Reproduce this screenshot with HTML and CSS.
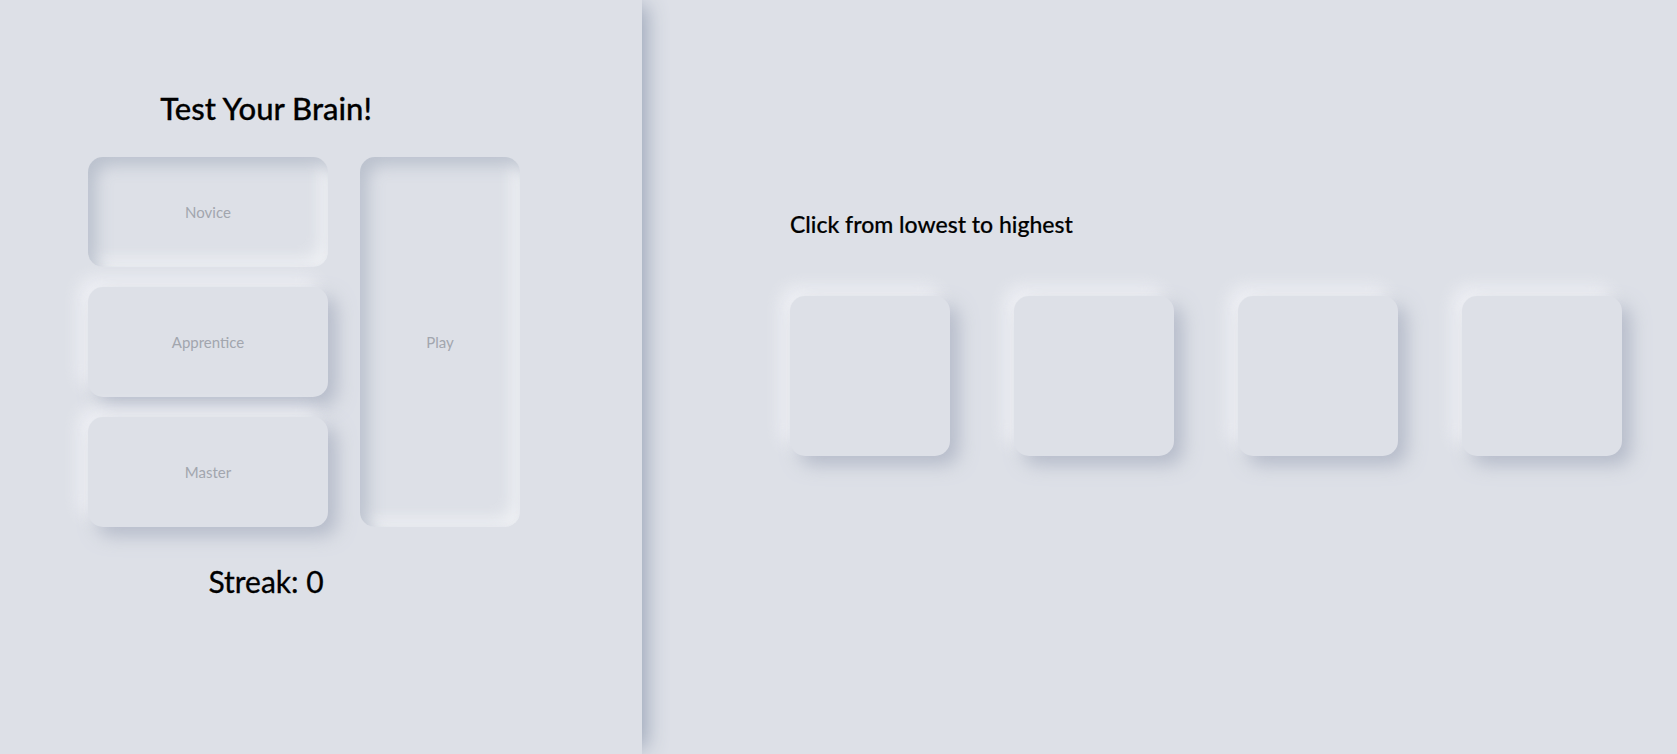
FILE: index.html
```html
<!DOCTYPE html>
<html>
<head>
<meta charset="utf-8">
<link rel="stylesheet" href="styles.css">
</head>
<body>
<div class="app">
  <section class="left-panel">
    <div class="left-inner">
      <h1 class="title">Test Your Brain!</h1>
      <div class="controls">
        <div class="levels">
          <button class="btn pressed">Novice</button>
          <button class="btn raised">Apprentice</button>
          <button class="btn raised">Master</button>
        </div>
        <button class="btn pressed play">Play</button>
      </div>
      <div class="streak">Streak: 0</div>
    </div>
  </section>
  <section class="right-panel">
    <h2 class="instructions">Click from lowest to highest</h2>
    <div class="cards">
      <div class="card"></div>
      <div class="card"></div>
      <div class="card"></div>
      <div class="card"></div>
    </div>
  </section>
</div>
</body>
</html>
```
FILE: styles.css
```css
* { box-sizing: border-box; }
html, body {
  margin: 0;
  padding: 0;
  height: 100%;
  background: #dde0e7;
  font-family: "Lato", "Noto Sans", sans-serif;
  overflow: hidden;
}
.app {
  display: flex;
  height: 754px;
}
.left-panel {
  width: 642px;
  flex: none;
  background: #dde0e7;
  position: relative;
  z-index: 1;
  box-shadow: 10px 0 20px -6px rgba(150, 160, 180, 0.95);
}
.left-inner {
  width: 532px;
  padding-top: 90px;
  display: flex;
  flex-direction: column;
}
.title {
  margin: 0;
  font-size: 31px;
  line-height: 37px;
  font-weight: 500;
  color: #000;
  text-align: center;
  -webkit-text-stroke: 0.3px #000;
}
.controls {
  margin: 30px 0 0 88px;
  display: flex;
  gap: 32px;
}
.levels {
  display: flex;
  flex-direction: column;
  gap: 20px;
}
.btn {
  border: none;
  background: #dde0e7;
  border-radius: 15px;
  font-family: "Lato", "Noto Sans", sans-serif;
  font-size: 15px;
  color: #a2a6ae;
  width: 240px;
  height: 110px;
  padding: 0;
}
.btn.play {
  width: 160px;
  height: 370px;
}
.raised {
  box-shadow: 9px 9px 18px rgba(165, 173, 190, 0.7), -9px -9px 18px rgba(250, 251, 253, 0.65);
}
.pressed {
  box-shadow: inset 8px 8px 16px rgba(178, 185, 199, 0.8), inset -8px -8px 16px rgba(245, 246, 249, 0.8);
}
.streak {
  margin-top: 37px;
  font-size: 30px;
  line-height: 34px;
  color: #000;
  text-align: center;
  -webkit-text-stroke: 0.3px #000;
}
.right-panel {
  flex: 1;
  padding: 211px 0 0 148px;
}
.instructions {
  margin: 0;
  font-size: 23px;
  line-height: 26px;
  font-weight: 500;
  color: #000;
  -webkit-text-stroke: 0.2px #000;
}
.cards {
  margin-top: 59px;
  display: flex;
  gap: 64px;
}
.card {
  width: 160px;
  height: 160px;
  border-radius: 15px;
  background: #dde0e7;
  box-shadow: 9px 9px 18px rgba(165, 173, 190, 0.7), -9px -9px 18px rgba(250, 251, 253, 0.65);
}
```
